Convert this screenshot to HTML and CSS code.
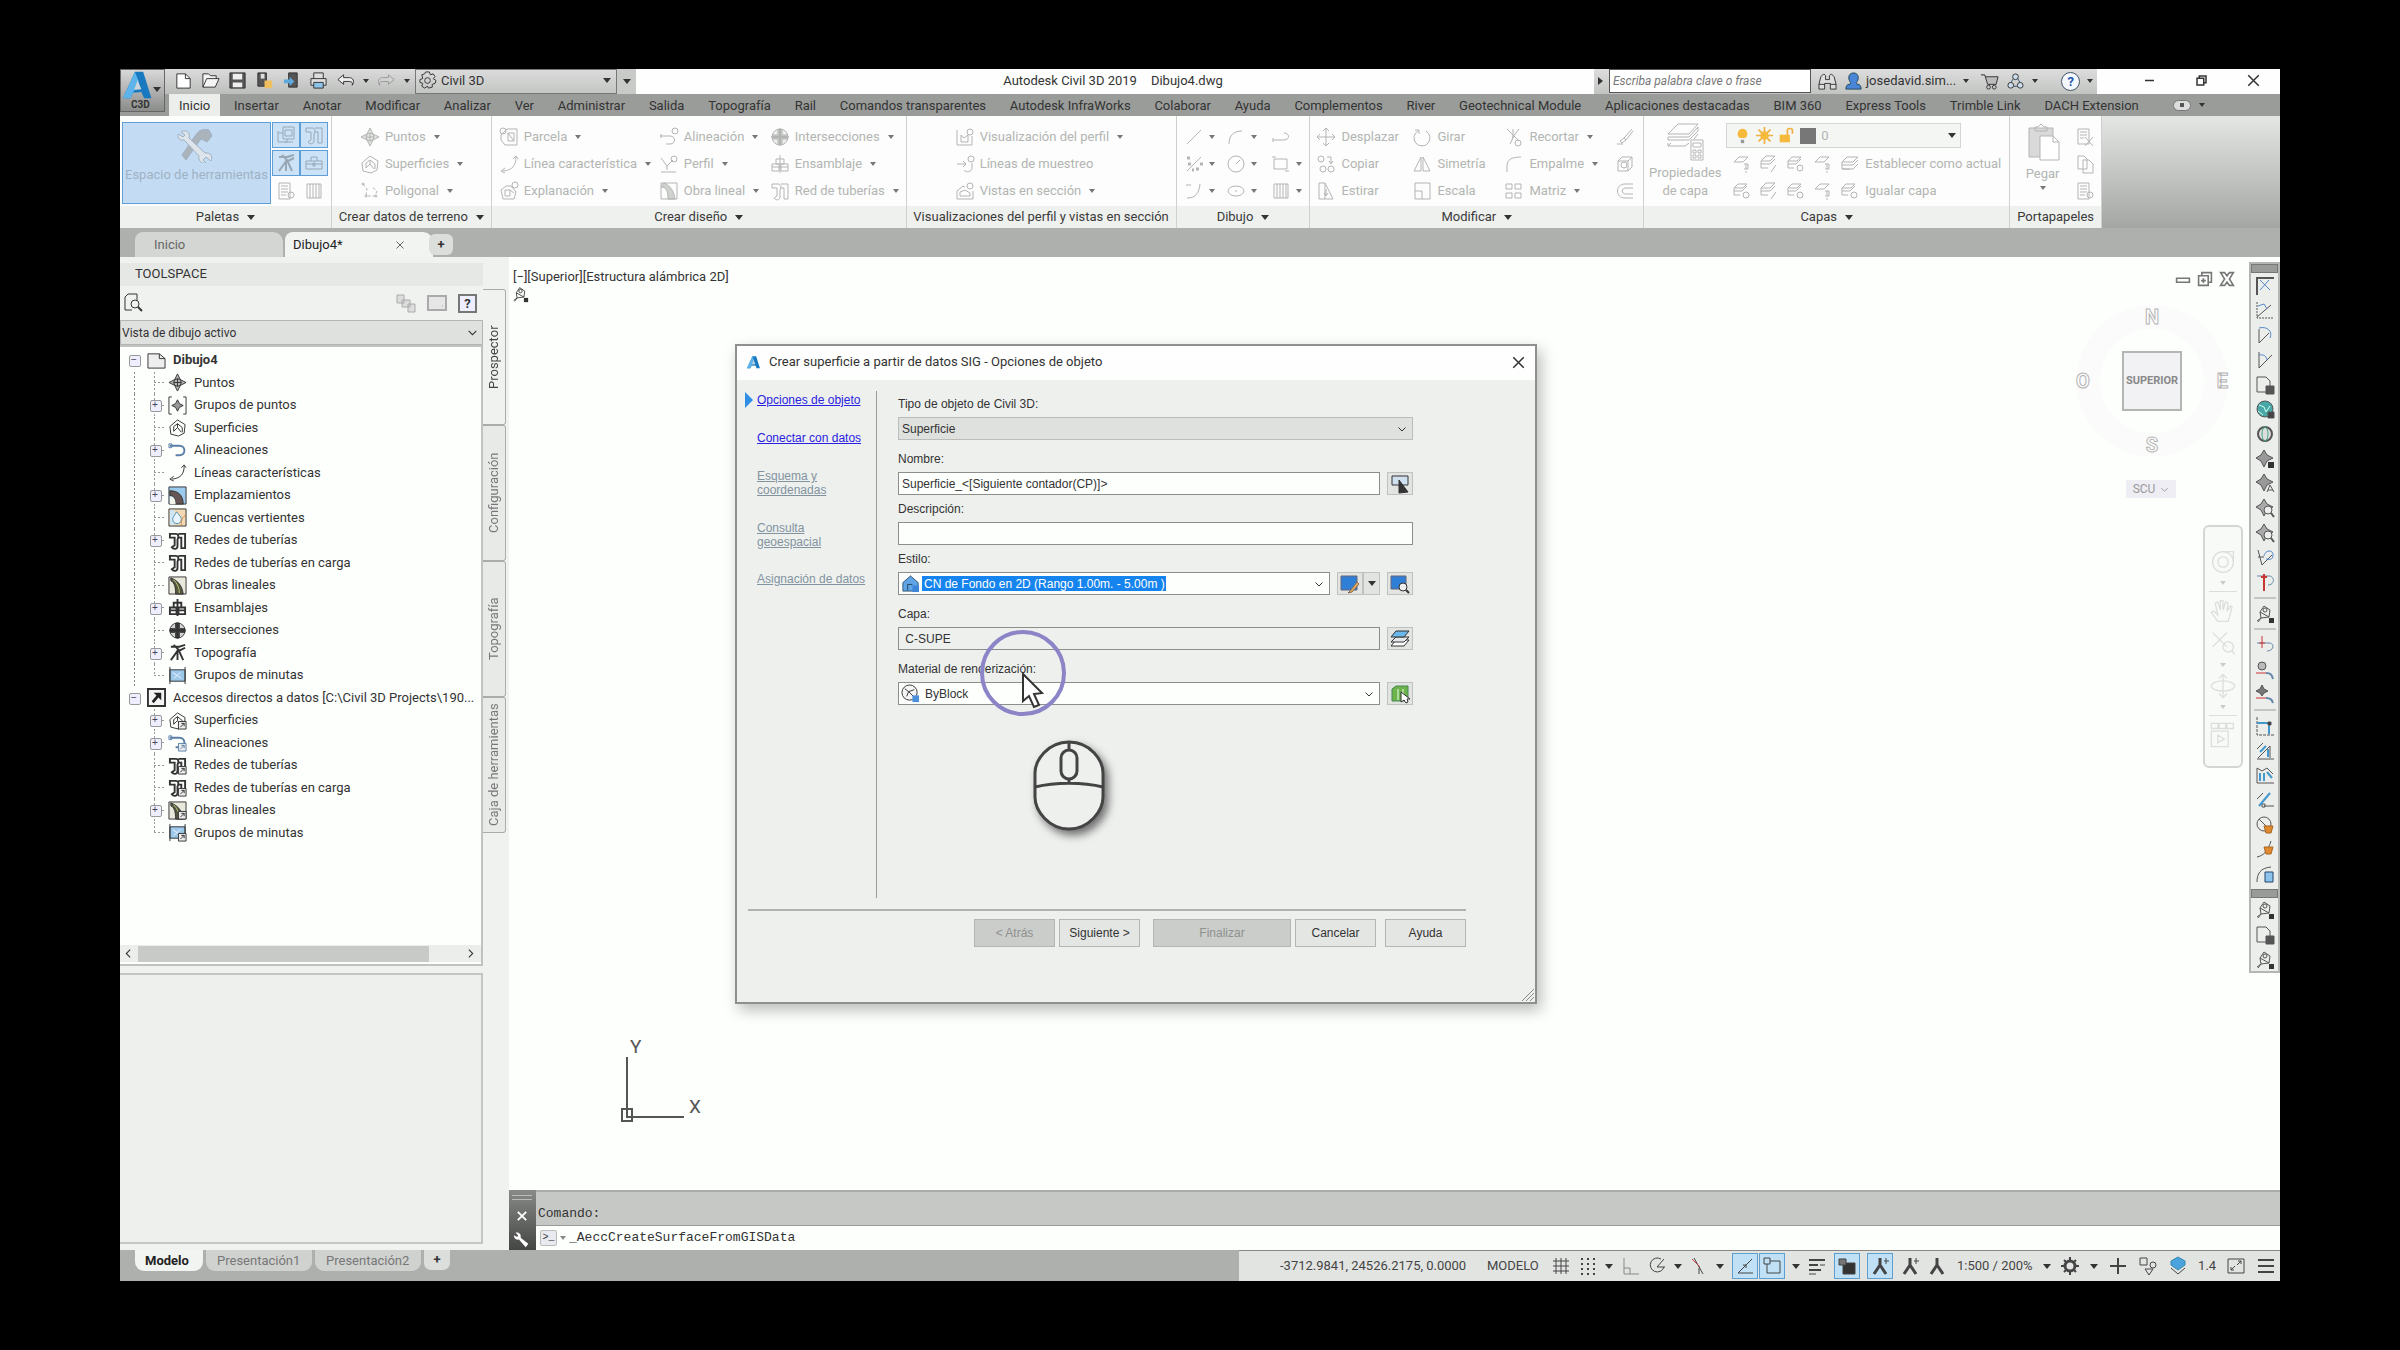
FILE: index.html
```html
<!DOCTYPE html>
<html lang="es">
<head>
<meta charset="utf-8">
<title>Autodesk Civil 3D 2019 - Dibujo4.dwg</title>
<link rel="stylesheet" href="styles.css">
</head>
<body>
<svg class="defs" aria-hidden="true">
<symbol id="new" viewBox="0 0 20 20"><path d="M3 3h9l5 5v10H3z" fill="#fff"/><path d="M12 3v5h5"/></symbol>
<symbol id="open" viewBox="0 0 20 20"><path d="M2 17V3h6l2 2h6v3M2 17l4-9h13l-4 9z" fill="#f4f4f4"/></symbol>
<symbol id="save" viewBox="0 0 20 20"><path d="M2 2h16v16H2z" fill="#555"/><path d="M5 3h10v6H5zM5 12h10v5H5z" fill="#eee" stroke="none"/></symbol>
<symbol id="saveas" viewBox="0 0 20 20"><path d="M3 2h9v14H3z" fill="#555"/><path d="M6 3h4v5H6z" fill="#ddd" stroke="none"/><path d="M10 10h8v8h-8z" fill="#f0c060" stroke="none"/></symbol>
<symbol id="cloud" viewBox="0 0 20 20"><path d="M7 2h9v15H7z" fill="#555"/><path d="M2 9h6V6l5 5-5 5v-3H2z" fill="#5fa8dc" stroke="none"/></symbol>
<symbol id="print" viewBox="0 0 20 20"><path d="M5 8V2h10v6M2 8h16v7H2z" fill="#ddd"/><path d="M5 12h10v6H5z" fill="#8cc4e8"/></symbol>
<symbol id="undo" viewBox="0 0 20 20"><path d="M8 4L2 9l6 5v-3h6c3 0 4 2 3 4 3-4 1-8-3-8H8z" fill="#eee"/></symbol>
<symbol id="redo" viewBox="0 0 20 20"><path d="M12 4l6 5-6 5v-3H6c-3 0-4 2-3 4-3-4-1-8 3-8h6z" fill="#ddd"/></symbol>
<symbol id="gear" viewBox="0 0 20 20"><path d="M8 1h4l1 3 3-1 2 3-2 2 3 2-1 3-3 1v3l-4 1-1-2-3 2-3-2 1-3-3-1V9l3-1-1-4 3-1z"/><circle cx="10" cy="10" r="3"/></symbol>
<symbol id="bino" viewBox="0 0 20 20"><path d="M3 5l3-3 2 2v4h4V4l2-2 3 3 2 8v5h-6v-6H7v6H1v-5z" fill="#ddd"/><path d="M1 13h6M13 13h6"/></symbol>
<symbol id="user" viewBox="0 0 20 20"><path d="M10 1c3 0 5 2 5 5 0 2-1 4-2 5l1 2c3 0 4 2 4 5H2c0-3 1-5 4-5l1-2C6 10 5 8 5 6c0-3 2-5 5-5z" fill="#4a86d8" stroke="#245"/></symbol>
<symbol id="cart" viewBox="0 0 20 20"><path d="M1 3h4l3 10h9l2-8H6" fill="#bbb"/><circle cx="9" cy="16" r="2"/><circle cx="15" cy="16" r="2"/></symbol>
<symbol id="a360" viewBox="0 0 20 20"><path d="M10 3l7 12H3z" stroke="#357"/><circle cx="10" cy="5" r="3" fill="#cde"/><circle cx="5" cy="14" r="3" fill="#cde"/><circle cx="15" cy="14" r="3" fill="#cde"/></symbol>
<symbol id="point" viewBox="0 0 20 20"><path d="M10 1l3 6 6 3-6 3-3 6-3-6-6-3 6-3z" fill="currentColor" fill-opacity=".35"/><circle cx="10" cy="10" r="4"/><path d="M10 6v8M6 10h8"/></symbol>
<symbol id="surf" viewBox="0 0 20 20"><path d="M10 2l8 5-1 9-6 3-8-2-1-8z"/><path d="M6 14V9l4-3 5 4v5M6 14l4-4 4 5M10 6v4"/></symbol>
<symbol id="poly" viewBox="0 0 20 20"><path d="M3 3l4 5-1 7h9l2-5-5-4" stroke-dasharray="3 2"/><circle cx="3" cy="3" r="1"/><circle cx="6" cy="15" r="1"/><circle cx="16" cy="15" r="1"/></symbol>
<symbol id="parcel" viewBox="0 0 20 20"><path d="M8 2h10v16H6l-4-5V8z"/><path d="M9 6h6v8H9zM9 6l6 8"/><circle cx="4" cy="4" r="3"/></symbol>
<symbol id="feat" viewBox="0 0 20 20"><path d="M17 3c0 8-3 13-13 14"/><path d="M14 5l3-3 2 3M6 14l-4 3 4 2"/></symbol>
<symbol id="grade" viewBox="0 0 20 20"><path d="M7 5h5l5 6-2 7H4L2 9z"/><path d="M6 9h5v6H6zM11 9l4 3"/><circle cx="16" cy="4" r="3"/></symbol>
<symbol id="align" viewBox="0 0 20 20"><path d="M2 5h10c7 0 7 10 0 10H8" stroke-width="2"/><path d="M1 3h3v4H1z"/></symbol>
<symbol id="alignc" viewBox="0 0 20 20"><path d="M1 9h10c6 0 6 8 0 8H7M2 7v4"/><circle cx="16" cy="4" r="3"/></symbol>
<symbol id="profile" viewBox="0 0 20 20"><path d="M2 4l6 8 6-6M2 18h15M8 12v4"/><circle cx="15" cy="5" r="3"/></symbol>
<symbol id="corr" viewBox="0 0 20 20"><path d="M2 2h16v16H2z"/><path d="M5 2c7 3 10 9 11 16H9C9 11 8 6 2 6z" fill="currentColor" fill-opacity=".6"/></symbol>
<symbol id="inter" viewBox="0 0 20 20"><circle cx="10" cy="10" r="8" fill="currentColor" fill-opacity=".2"/><path d="M8 2v6H2M12 2v6h6M8 18v-6H2M12 18v-6h6"/><path d="M9 2h2v16H9zM2 9h16v2H2z" fill="currentColor"/></symbol>
<symbol id="asm" viewBox="0 0 20 20"><path d="M10 1v18M6 5h8v5H6zM2 10h7v7H2zM11 10h7v7h-7zM2 13h16"/></symbol>
<symbol id="pipe" viewBox="0 0 20 20"><path d="M2 3h6c4 0 3 4 2 6v7c0 3-4 4-6 1l3-2V7H2zM11 3h7v15h-4V7h-3"/></symbol>
<symbol id="view" viewBox="0 0 20 20"><path d="M2 3v15h15V9M6 8v7h7V8l-4 3z"/><circle cx="15" cy="5" r="3"/></symbol>
<symbol id="sect" viewBox="0 0 20 20"><path d="M2 18v-8l6-5 2 1M2 18h16v-8M5 15v-4l5-2 5 3v3z"/><circle cx="15" cy="5" r="3"/></symbol>
<symbol id="sample" viewBox="0 0 20 20"><path d="M2 10h9M8 7l3 3-3 3M17 9v5c0 4-6 5-8 2"/><circle cx="16" cy="5" r="3"/></symbol>
<symbol id="line" viewBox="0 0 20 20"><path d="M3 17L17 3"/></symbol>
<symbol id="arc" viewBox="0 0 20 20"><path d="M3 17C3 8 8 4 16 4"/></symbol>
<symbol id="pline" viewBox="0 0 20 20"><path d="M2 13h11c6 0 6-7 0-7M2 11v4"/></symbol>
<symbol id="dots" viewBox="0 0 20 20"><path d="M3 17L17 3"/><path d="M3 4h3M4 10h3M12 15h3M16 10h3M8 16h2" stroke-width="3"/></symbol>
<symbol id="circ" viewBox="0 0 20 20"><circle cx="10" cy="10" r="8"/><path d="M10 10l4-4"/></symbol>
<symbol id="rect" viewBox="0 0 20 20"><path d="M3 5h13v10H3z"/><path d="M1 3h4M14 17h4"/></symbol>
<symbol id="curve" viewBox="0 0 20 20"><path d="M2 4h5M3 17C12 17 15 12 16 3"/></symbol>
<symbol id="ell" viewBox="0 0 20 20"><ellipse cx="10" cy="10" rx="8" ry="5"/><path d="M9 10h2"/></symbol>
<symbol id="hatch" viewBox="0 0 20 20"><path d="M3 3h14v14H3z"/><path d="M6 3v14M9 3v14M12 3v14M15 3v14"/></symbol>
<symbol id="move" viewBox="0 0 20 20"><path d="M10 1v18M1 10h18M7 4l3-3 3 3M7 16l3 3 3-3M4 7l-3 3 3 3M16 7l3 3-3 3"/></symbol>
<symbol id="copy" viewBox="0 0 20 20"><circle cx="5" cy="5" r="3"/><circle cx="7" cy="15" r="3"/><circle cx="15" cy="15" r="3"/><path d="M11 3h4v6M13 7l2 3 2-3"/></symbol>
<symbol id="stretch" viewBox="0 0 20 20"><path d="M3 2h6v16H3zM9 2l8 16H9M10 8v6M8 12l2 3 2-3"/></symbol>
<symbol id="rotate" viewBox="0 0 20 20"><path d="M6 4a8 8 0 1 0 8 0M3 3l4 0v4"/></symbol>
<symbol id="mirror" viewBox="0 0 20 20"><path d="M9 3v14H2zM11 3v14h7z"/></symbol>
<symbol id="scale" viewBox="0 0 20 20"><path d="M3 2h15v16H3zM3 10h7v8"/></symbol>
<symbol id="trim" viewBox="0 0 20 20"><path d="M3 2l12 12M9 2v9L6 17M15 2L8 11"/><circle cx="14" cy="16" r="3"/></symbol>
<symbol id="fillet" viewBox="0 0 20 20"><path d="M3 18v-6C3 6 7 3 17 3"/></symbol>
<symbol id="array" viewBox="0 0 20 20"><path d="M2 3h6v5H2zM11 3h6v5h-6zM2 12h6v5H2zM11 12h6v5h-6z"/></symbol>
<symbol id="brush" viewBox="0 0 20 20"><path d="M17 2l-8 9 2 2 7-9M9 11l-4 3 2 2 4-3M2 17h6"/></symbol>
<symbol id="box" viewBox="0 0 20 20"><path d="M3 7h10v10H3zM7 3h10v10l-4 4M3 7l4-4M13 7l4-4"/><circle cx="9" cy="11" r="3"/></symbol>
<symbol id="offset" viewBox="0 0 20 20"><path d="M18 3h-8c-10 0-10 14 0 14h8M18 7h-7c-5 0-5 6 0 6h7"/></symbol>
<symbol id="layer" viewBox="0 0 20 20"><path d="M7 3h11l-5 5H2zM2 8v3h11l5-5M2 11v4h11l5-5M2 15h8"/></symbol>
<symbol id="layprop" viewBox="0 0 40 38"><path d="M13 1h20l-9 10H3zM3 14h21l9-10v4l-9 9H3zM3 20v3h17l4-3M33 11l-4 5M3 23l3-3"/><path d="M26 17h12v20H26z" fill="#fff"/><path d="M28 20h8v4h-8zM28 27h3v3h-3zM33 27h3v3h-3zM28 32h3v3h-3zM33 32h3v3h-3z"/></symbol>
<symbol id="lay1" viewBox="0 0 20 20"><path d="M7 3h9l-5 5H2z"/><path d="M14 10v5M14 17v2M12 10h4v5h-4"/></symbol>
<symbol id="lay2" viewBox="0 0 20 20"><path d="M7 2h9l-5 5H2zM2 7v3h9l5-5M2 10v4h7M17 11l-5 7"/></symbol>
<symbol id="lay3" viewBox="0 0 20 20"><path d="M6 3h9l-4 4H2zM2 7v3h8l5-5M2 10v4h6"/><circle cx="14" cy="14" r="3"/></symbol>
<symbol id="clip" viewBox="0 0 34 38"><path d="M3 4h24v29H3z" fill="currentColor" fill-opacity=".5"/><path d="M9 7V3h3l3-3 3 3h3v4z"/><path d="M14 12h13l6 6v18H14z" fill="#fff"/><path d="M27 12v6h6"/></symbol>
<symbol id="cut" viewBox="0 0 20 20"><path d="M3 2h11v15H3zM5 5h7M5 8h7M5 11h4M10 10l8 9M18 10l-8 9"/></symbol>
<symbol id="pages" viewBox="0 0 20 20"><path d="M3 2h6l3 3v10H3zM8 6h6l4 4v9H8z"/></symbol>
<symbol id="sheet" viewBox="0 0 20 20"><path d="M3 2h11v16H3zM5 5h7M5 8h7M5 11h7M5 14h5"/><circle cx="15" cy="14" r="3"/></symbol>
<symbol id="tools" viewBox="0 0 38 34"><path d="M32 1c-6-2-11 1-14 6L5 26l4 5 15-21 6 3 5-6z" fill="#aab3ba"/><path d="M4 3c4-3 10 0 8 6l16 15c6-1 8 4 6 8l-5-4-3 3 3 3c-5 1-8-3-7-7L7 11C3 12 0 9 1 5l5 3 2-2z" fill="#dde4ea"/></symbol>
<symbol id="survey" viewBox="0 0 20 20"><path d="M3 4h10M6 2l5 5-8 11M11 7l5 11M10 7v11M11 4l7-2M12 8l6-3" stroke-width="2"/></symbol>
<symbol id="case" viewBox="0 0 20 20"><path d="M2 8h16v8H2zM7 8V4h6v4M2 11h16M9 10h2v3H9z"/></symbol>
<symbol id="dwg" viewBox="0 0 20 20"><path d="M1 3h12l6 5v10H1z" fill="#eee"/><path d="M13 3v5h6"/></symbol>
<symbol id="group" viewBox="0 0 20 20"><path d="M4 1H1v18h3M16 1h3v18h-3"/><path d="M10 4l2 4 4 2-4 2-2 4-2-4-4-2 4-2z" fill="#999"/></symbol>
<symbol id="site" viewBox="0 0 20 20"><path d="M1 1h18v18H1z" fill="#9ccbee"/><path d="M2 5c9 0 14 5 14 14H8c0-6-2-9-6-9z" fill="#655"/><path d="M2 11c4 0 6 3 6 8H2z" fill="#f4f4ec" stroke="none"/></symbol>
<symbol id="basin" viewBox="0 0 20 20"><path d="M1 1h18v18H1z" fill="#f2d9b4"/><path d="M2 2h5v16H2z" fill="#cfe6f5" stroke="none"/><path d="M9 4c4 5 5 6 5 8 0 6-9 6-9 0 0-2 1-3 4-8z" fill="#eaf6ff" stroke="#48a"/><path d="M14 18c0-6 1-9 5-10" stroke="#c84"/></symbol>
<symbol id="corrc" viewBox="0 0 20 20"><path d="M1 1h18v18H1z" fill="#e8e8dc"/><path d="M3 2c8 3 12 9 13 17H8c0-7-1-12-5-14z" fill="#554"/><path d="M6 4c4 4 6 9 6 14" stroke="#bc6"/></symbol>
<symbol id="minute" viewBox="0 0 20 20"><path d="M2 1v18M18 1v18M2 4h16v12H2z" fill="#9cc8ea"/><path d="M5 7l9 6M6 13l7-6" stroke="#eef"/></symbol>
<symbol id="short" viewBox="0 0 20 20"><path d="M1 1h18v18H1z" fill="#f4f4f4" stroke-width="2"/><path d="M7 5h8v8l-3-3-5 6-2-2 5-6z" fill="#222" stroke="none"/></symbol>
<symbol id="badge" viewBox="0 0 20 20"><path d="M11 11h8v8h-8z" fill="#eee" stroke-width="1"/><path d="M13 17l4-4M14 13h3v3" stroke-width="1"/></symbol>
<symbol id="find" viewBox="0 0 20 20"><path d="M9 17H2V4l3-3h9v6"/><circle cx="12" cy="11" r="4"/><path d="M15 14l4 4" stroke-width="2"/></symbol>
<symbol id="boxes" viewBox="0 0 20 20"><path d="M1 2h7v8H1zM6 7h8v7H6zM12 11h7v8h-7z" fill="#ddd"/></symbol>
<symbol id="screens" viewBox="0 0 20 20"><path d="M7 2h11v12H7zM2 8h5M2 6v11h9v-3M9 17h8M9 5h7v6H9z"/></symbol>
<symbol id="panel" viewBox="0 0 20 20"><path d="M1 3h18v14H1z" fill="#e6e6e6" stroke-width="2"/><path d="M15 13h1"/></symbol>
<symbol id="pick" viewBox="0 0 20 20"><path d="M2 2h16v9H2z" fill="#cfe0f0"/><path d="M9 6v13l9-1z" fill="#333"/></symbol>
<symbol id="edit" viewBox="0 0 20 20"><path d="M1 2h16v14H1z" fill="#2f7fd6" stroke="#667"/><path d="M17 8l-7 9-2 2 4-1 7-8z" fill="#e0b060" stroke="#865"/></symbol>
<symbol id="look" viewBox="0 0 20 20"><path d="M1 2h15v13H1z" fill="#2f7fd6" stroke="#667"/><circle cx="13" cy="13" r="4" fill="#eee"/><path d="M16 16l3 3" stroke-width="2"/></symbol>
<symbol id="layc" viewBox="0 0 20 20"><path d="M6 11h13l-5 6H1z" fill="#fff"/><path d="M6 8h13l-5 5H1z" fill="#e4e8ea"/><path d="M6 2h13l-5 6H1z" fill="#6ab8ec"/></symbol>
<symbol id="mat" viewBox="0 0 20 20"><path d="M2 5l4-3h12v12l-3 3H2z" fill="#6db34c" stroke="#485"/><path d="M8 5v11M13 5v11" stroke="#efe"/><path d="M11 8v10l3-2 2 3 2-1-1-3h3z" fill="#fff"/></symbol>
<symbol id="house" viewBox="0 0 20 20"><path d="M10 2l8 7v9H2V9z" fill="#5fa4e6" stroke="#357"/><path d="M7 17v-6h5" stroke="#245"/><path d="M12 12h7v7h-7z" fill="#3f86d8" stroke="none"/></symbol>
<symbol id="ball" viewBox="0 0 20 20"><circle cx="9" cy="9" r="8" fill="#f6f6f6"/><path d="M4 5l4 3-2 5M8 8l6-2M8 8l5 5"/><path d="M12 12h7v7h-7z" fill="#4a8fdc" stroke="none"/></symbol>
<symbol id="s1" viewBox="0 0 20 20"><path d="M2 19V2h17M2 19V2" stroke-width="2"/><path d="M5 4l10 10M5 14L14 4" stroke="#58c"/></symbol>
<symbol id="s2" viewBox="0 0 20 20"><path d="M2 2v16h16" stroke-dasharray="2 1"/><path d="M2 17L16 5"/><path d="M3 6l6-2 3 5" stroke="#58c"/></symbol>
<symbol id="s3" viewBox="0 0 20 20"><path d="M4 4v14L14 8"/><path d="M4 3c8-2 14 3 11 10" stroke="#58c"/></symbol>
<symbol id="s4" viewBox="0 0 20 20"><path d="M4 2v16L17 5"/><path d="M4 5c5-1 8 2 8 5" stroke="#58c"/></symbol>
<symbol id="s5" viewBox="0 0 20 20"><path d="M2 2h9l4 4v11H2z"/><path d="M11 11h8v8h-8z" fill="#555"/></symbol>
<symbol id="globe" viewBox="0 0 20 20"><circle cx="10" cy="10" r="8" fill="#4aa7a8"/><path d="M4 6l5 2 2 5 4-6M3 12l5 4" stroke="#cfe"/><path d="M13 13h6v6h-6z" fill="#444"/></symbol>
<symbol id="globe2" viewBox="0 0 20 20"><circle cx="10" cy="10" r="7" fill="#ddd" stroke-width="2"/><ellipse cx="10" cy="10" rx="3" ry="7" stroke="#4a8"/></symbol>
<symbol id="pt1" viewBox="0 0 20 20"><path d="M9 1l3 5 6 3-6 3-3 6-3-6-5-3 5-3z" fill="#999"/><path d="M13 13h6v6h-6z" fill="#333" stroke="none"/></symbol>
<symbol id="pt2" viewBox="0 0 20 20"><path d="M9 1l3 5 6 3-6 3-3 6-3-6-5-3 5-3z" fill="#999"/><path d="M12 19l3-7 4 7M13 17h5"/></symbol>
<symbol id="pt3" viewBox="0 0 20 20"><path d="M9 1l3 5 6 3-6 3-3 6-3-6-5-3 5-3z" fill="#aaa"/><circle cx="13" cy="12" r="4" fill="#eee"/><path d="M16 15l3 4" stroke-width="2"/></symbol>
<symbol id="s6" viewBox="0 0 20 20"><path d="M3 3l4 15L17 8M3 10h6"/><path d="M9 9c1-6 9-7 9-1s-5 4-7 4" stroke="#58c"/></symbol>
<symbol id="s7" viewBox="0 0 20 20"><path d="M2 4h12c6 0 6 9-1 9" stroke="#68a"/><path d="M9 2v17M6 5h6" stroke="#c33" stroke-width="2"/></symbol>
<symbol id="net" viewBox="0 0 20 20"><path d="M9 2l6 4-1 7-8 1-3 4M9 2L5 8l1 6M5 8l9 5M2 17l4-3"/><circle cx="10" cy="6" r="2"/><path d="M14 14h5v5h-5z" fill="#333" stroke="none"/></symbol>
<symbol id="s8" viewBox="0 0 20 20"><path d="M2 8h12c6 0 5 8-2 8" stroke="#68a"/><path d="M7 1v12M4 8h6" stroke="#c33"/></symbol>
<symbol id="s9" viewBox="0 0 20 20"><circle cx="7" cy="6" r="4" fill="#bbb"/><path d="M1 13h10" stroke="#c33"/><path d="M11 13c5 0 6 2 7 6" stroke="#68a" stroke-width="2"/></symbol>
<symbol id="s10" viewBox="0 0 20 20"><path d="M7 1l2 4 4 2-4 2-2 3-2-3-4-2 4-2z" fill="#777"/><path d="M1 14h10" stroke="#c33"/><path d="M11 14c5 0 6 2 7 5" stroke="#68a" stroke-width="2"/></symbol>
<symbol id="r1" viewBox="0 0 20 20"><path d="M2 1v18h17" stroke-dasharray="3 1"/><path d="M2 7h12v11" stroke="#49c" stroke-width="2"/><path d="M13 6h3v3h-3z" fill="#333"/></symbol>
<symbol id="r2" viewBox="0 0 20 20"><path d="M2 9l6-6M2 19h17M3 18l12-12v12"/><path d="M5 12l6-6M13 9v8" stroke="#49c" stroke-width="2"/></symbol>
<symbol id="r3" viewBox="0 0 20 20"><path d="M2 3v15h17M2 3l5 3 5-3 6 6"/><path d="M5 8v8M9 8v8M12 7l5 6" stroke="#49c" stroke-width="2"/></symbol>
<symbol id="r4" viewBox="0 0 20 20"><path d="M2 9l6-6M9 16h10M7 14h3v3H7z"/><path d="M4 16L15 3" stroke="#49c" stroke-width="2"/></symbol>
<symbol id="r5" viewBox="0 0 20 20"><circle cx="9" cy="9" r="7"/><path d="M4 4l8 8"/><path d="M9 11h9l-2 7h-5z" fill="#e08a30" stroke="#a62"/></symbol>
<symbol id="r6" viewBox="0 0 20 20"><path d="M2 18c6-1 11-6 14-16"/><path d="M9 8h9l-2 7h-5z" fill="#e08a30" stroke="#a62"/></symbol>
<symbol id="r7" viewBox="0 0 20 20"><path d="M2 18c0-8 3-14 14-15"/><path d="M10 8h8v10h-8z" fill="#8cc4ee" stroke="#246"/></symbol>
<symbol id="wheel" viewBox="0 0 20 20"><circle cx="10" cy="10" r="8"/><circle cx="10" cy="10" r="4"/><path d="M10 2h8v8"/></symbol>
<symbol id="hand" viewBox="0 0 20 20"><path d="M6 18l-5-7 2-1 3 3L4 4l2-1 2 6V2h2v7l2-6 2 1-1 6 3-4 1 1-3 11z"/></symbol>
<symbol id="zoomx" viewBox="0 0 20 20"><path d="M2 2l11 11M13 2L2 13"/><circle cx="14" cy="13" r="4"/><path d="M17 16l2 3"/></symbol>
<symbol id="orbit" viewBox="0 0 20 20"><ellipse cx="10" cy="10" rx="9" ry="4"/><path d="M10 1v18M7 4l3-3 3 3M7 16l3 3 3-3"/></symbol>
<symbol id="film" viewBox="0 0 20 20"><path d="M1 1h5v4H1zM7 1h5v4H7zM13 1h5v4h-5zM1 7h13v12H1zM6 10l5 3-5 3z"/></symbol>
<symbol id="grid" viewBox="0 0 20 20"><path d="M5 2v16M10 2v16M15 2v16M2 5h16M2 10h16M2 15h16"/></symbol>
<symbol id="snap" viewBox="0 0 20 20"><path d="M3 3h2M9 3h2M15 3h2M3 8h2M9 8h2M15 8h2M3 13h2M9 13h2M15 13h2M3 18h2M9 18h2M15 18h2" stroke-width="2"/></symbol>
<symbol id="ortho" viewBox="0 0 20 20"><path d="M4 2v16h15M4 12h6v6" stroke="#888"/></symbol>
<symbol id="polar" viewBox="0 0 20 20"><path d="M14 3a7 7 0 1 0 3 8M10 11l7-8M10 11h8"/></symbol>
<symbol id="iso" viewBox="0 0 20 20"><path d="M5 2l9 16"/><path d="M3 3l8 8" stroke="#c44"/><path d="M10 12v6"/></symbol>
<symbol id="track" viewBox="0 0 20 20"><path d="M17 3L3 17h15"/><path d="M8 9h3v3" /></symbol>
<symbol id="osnap" viewBox="0 0 20 20"><path d="M5 5h13v12H5z"/><path d="M2 2h6v6H2z" fill="#bfe0f4"/></symbol>
<symbol id="lwt" viewBox="0 0 20 20"><path d="M2 4h16M2 9h9M2 14h12" stroke-width="2"/><path d="M2 18h7M13 9h5"/></symbol>
<symbol id="transp" viewBox="0 0 20 20"><path d="M6 7h12v11H6z" fill="#333"/><path d="M2 3h7v6H2z" fill="#777"/></symbol>
<symbol id="anno" viewBox="0 0 20 20"><path d="M10 2v8M10 9l-6 9M10 9l6 9" stroke-width="3"/></symbol>
<symbol id="star" viewBox="0 0 20 20"><path d="M14 5h5M16 2v6"/></symbol>
<symbol id="cog" viewBox="0 0 20 20"><circle cx="10" cy="10" r="5" stroke-width="3"/><path d="M10 1v4M10 15v4M1 10h4M15 10h4M4 4l3 3M13 13l3 3M16 4l-3 3M7 13l-3 3" stroke-width="2"/></symbol>
<symbol id="plus" viewBox="0 0 20 20"><path d="M10 2v16M2 10h16" stroke-width="2"/></symbol>
<symbol id="iso2" viewBox="0 0 20 20"><path d="M2 2h7v7H2zM11 19l-4-6h8z"/><circle cx="15" cy="9" r="3"/></symbol>
<symbol id="perf" viewBox="0 0 20 20"><path d="M10 1l7 4v4l-7 5-7-5V5z" fill="#4aa3dc" stroke="#38a"/><path d="M3 12l7 6 7-6"/></symbol>
<symbol id="clean" viewBox="0 0 20 20"><path d="M2 3h16v14H2zM5 14l4-4M11 9l4-4M15 8V5h-3M5 11v3h3"/></symbol>
<symbol id="menu" viewBox="0 0 20 20"><path d="M2 4h16M2 10h16M2 16h16" stroke-width="2"/></symbol>
<symbol id="wrench" viewBox="0 0 20 20"><path d="M3 2c4-1 7 2 6 6l9 7-3 4-8-9c-4 1-6-2-6-5l4 2 1-2z" fill="#fff" stroke="none"/></symbol>
<symbol id="x" viewBox="0 0 20 20"><path d="M3 3l14 14M17 3L3 17"/></symbol>
<symbol id="chev" viewBox="0 0 20 20"><path d="M3 7l7 7 7-7" stroke-width="2"/></symbol>
<symbol id="logo" viewBox="0 0 36 30"><path d="M13 0h9l9 29h-8l-3-7-9 1-3 6H0z" fill="#1878c0" stroke="none"/><path d="M13 0L0 29l8 0 3-6 6-13z" fill="#5cb4ea" stroke="none"/><path d="M16 9l4 10-8 1z" fill="#c9d4dc" stroke="none"/></symbol>
</svg>

<div class="app">
  <header class="top">
    <button class="appbtn" aria-label="Menú de la aplicación"><svg class="logo"><use href="#logo"/></svg><i class="caret"></i><b>C3D</b></button>
    <div class="topmain">
      <div class="titlebar">
        <div class="quick">
          <svg><use href="#new"/></svg><svg><use href="#open"/></svg><svg><use href="#save"/></svg><svg><use href="#saveas"/></svg><svg><use href="#cloud"/></svg><svg><use href="#print"/></svg><svg><use href="#undo"/></svg><i class="caret"></i><svg class="off"><use href="#redo"/></svg><i class="caret"></i>
        </div>
        <div class="workspace"><svg><use href="#gear"/></svg><select aria-label="Espacio de trabajo"><option>Civil 3D</option></select><i class="caret"></i></div>
        <button class="quickmore" aria-label="Personalizar"><i class="caret"></i></button>
        <div class="title"><span>Autodesk Civil 3D 2019</span><span>Dibujo4.dwg</span></div>
        <div class="info">
          <i class="caret side"></i>
          <input type="text" placeholder="Escriba palabra clave o frase" aria-label="Buscar">
          <svg><use href="#bino"/></svg><svg><use href="#user"/></svg><span class="uname">josedavid.sim...</span><i class="caret"></i><svg class="cart"><use href="#cart"/></svg><svg><use href="#a360"/></svg><i class="caret"></i><button class="help" aria-label="Ayuda">?</button><i class="caret"></i>
        </div>
        <div class="winbtns">
          <button aria-label="Minimizar"><svg viewBox="0 0 20 20"><path d="M4 10h12" stroke-width="2"/></svg></button>
          <button aria-label="Restaurar"><svg viewBox="0 0 20 20"><path d="M4 7h9v9H4zM7 7V4h9v9h-3" stroke-width="2"/></svg></button>
          <button aria-label="Cerrar"><svg class="heavy"><use href="#x"/></svg></button>
        </div>
      </div>
      <nav class="tabs">
        <div class="tablist"><a class="on" href="#">Inicio</a><a href="#">Insertar</a><a href="#">Anotar</a><a href="#">Modificar</a><a href="#">Analizar</a><a href="#">Ver</a><a href="#">Administrar</a><a href="#">Salida</a><a href="#">Topografía</a><a href="#">Rail</a><a href="#">Comandos transparentes</a><a href="#">Autodesk InfraWorks</a><a href="#">Colaborar</a><a href="#">Ayuda</a><a href="#">Complementos</a><a href="#">River</a><a href="#">Geotechnical Module</a><a href="#">Aplicaciones destacadas</a><a href="#">BIM 360</a><a href="#">Express Tools</a><a href="#">Trimble Link</a><a href="#">DACH Extension</a></div>
        <span class="pill"><i></i></span><i class="caret"></i>
      </nav>
    </div>
  </header>

  <section class="ribbon">
    <div class="panel">
      <div class="pbody pal">
        <button class="big"><svg><use href="#tools"/></svg>Espacio de herramientas</button>
        <div class="palgrid"><span class="lit"><svg><use href="#screens"/></svg></span><span class="lit"><svg><use href="#pipe"/></svg></span><span class="lit"><svg><use href="#survey"/></svg></span><span class="lit"><svg><use href="#case"/></svg></span><span><svg><use href="#sheet"/></svg></span><span><svg><use href="#hatch"/></svg></span></div>
      </div>
      <div class="plabel">Paletas <i class="caret"></i></div>
    </div>
    <div class="panel">
      <div class="pbody rows terr">
        <button><svg><use href="#point"/></svg>Puntos<i class="caret"></i></button>
        <button><svg><use href="#surf"/></svg>Superficies<i class="caret"></i></button>
        <button><svg><use href="#poly"/></svg>Poligonal<i class="caret"></i></button>
      </div>
      <div class="plabel">Crear datos de terreno <i class="caret"></i></div>
    </div>
    <div class="panel">
      <div class="pbody rows dis">
        <button><svg><use href="#parcel"/></svg>Parcela<i class="caret"></i></button><button><svg><use href="#alignc"/></svg>Alineación<i class="caret"></i></button><button><svg><use href="#inter"/></svg>Intersecciones<i class="caret"></i></button>
        <button><svg><use href="#feat"/></svg>Línea característica<i class="caret"></i></button><button><svg><use href="#profile"/></svg>Perfil<i class="caret"></i></button><button><svg><use href="#asm"/></svg>Ensamblaje<i class="caret"></i></button>
        <button><svg><use href="#grade"/></svg>Explanación<i class="caret"></i></button><button><svg><use href="#corr"/></svg>Obra lineal<i class="caret"></i></button><button><svg><use href="#pipe"/></svg>Red de tuberías<i class="caret"></i></button>
      </div>
      <div class="plabel">Crear diseño <i class="caret"></i></div>
    </div>
    <div class="panel">
      <div class="pbody rows vis">
        <button><svg><use href="#view"/></svg>Visualización del perfil<i class="caret"></i></button>
        <button><svg><use href="#sample"/></svg>Líneas de muestreo</button>
        <button><svg><use href="#sect"/></svg>Vistas en sección<i class="caret"></i></button>
      </div>
      <div class="plabel">Visualizaciones del perfil y vistas en sección</div>
    </div>
    <div class="panel">
      <div class="pbody rows dib">
        <button aria-label="Línea"><svg><use href="#line"/></svg><i class="caret"></i></button><button aria-label="Arco"><svg><use href="#arc"/></svg><i class="caret"></i></button><button aria-label="Polilínea"><svg><use href="#pline"/></svg></button>
        <button aria-label="Puntos"><svg><use href="#dots"/></svg><i class="caret"></i></button><button aria-label="Círculo"><svg><use href="#circ"/></svg><i class="caret"></i></button><button aria-label="Rectángulo"><svg><use href="#rect"/></svg><i class="caret"></i></button>
        <button aria-label="Curva"><svg><use href="#curve"/></svg><i class="caret"></i></button><button aria-label="Elipse"><svg><use href="#ell"/></svg><i class="caret"></i></button><button aria-label="Sombreado"><svg><use href="#hatch"/></svg><i class="caret"></i></button>
      </div>
      <div class="plabel">Dibujo <i class="caret"></i></div>
    </div>
    <div class="panel">
      <div class="pbody rows mod">
        <button><svg><use href="#move"/></svg>Desplazar</button><button><svg><use href="#rotate"/></svg>Girar</button><button><svg><use href="#trim"/></svg>Recortar<i class="caret"></i></button><button aria-label="Borrar"><svg><use href="#brush"/></svg></button>
        <button><svg><use href="#copy"/></svg>Copiar</button><button><svg><use href="#mirror"/></svg>Simetría</button><button><svg><use href="#fillet"/></svg>Empalme<i class="caret"></i></button><button aria-label="Descomponer"><svg><use href="#box"/></svg></button>
        <button><svg><use href="#stretch"/></svg>Estirar</button><button><svg><use href="#scale"/></svg>Escala</button><button><svg><use href="#array"/></svg>Matriz<i class="caret"></i></button><button aria-label="Desfase"><svg><use href="#offset"/></svg></button>
      </div>
      <div class="plabel">Modificar <i class="caret"></i></div>
    </div>
    <div class="panel">
      <div class="pbody capas">
        <button class="tall"><svg><use href="#layprop"/></svg><span>Propiedades<br>de capa</span></button>
        <div class="laygrid">
          <div class="layersel">
            <svg viewBox="0 0 20 20"><path d="M10 2a6 6 0 0 1 3 11H7a6 6 0 0 1 3-11z" fill="#f5b93c" stroke="none"/><path d="M8 15h4v4H8z" fill="#999" stroke="none"/></svg>
            <svg viewBox="0 0 20 20"><path d="M10 0v20M0 10h20M3 3l14 14M17 3L3 17" stroke="#f0b040" stroke-width="2"/><circle cx="10" cy="10" r="5" fill="#f5b93c" stroke="none"/></svg>
            <svg viewBox="0 0 20 20"><path d="M2 9h12v9H2z" fill="#f5b93c" stroke="none"/><path d="M11 9V4c0-3 6-3 6 0v4" stroke="#f0b040" stroke-width="2"/></svg>
            <i class="swatch"></i><select aria-label="Capa actual"><option>0</option></select><i class="caret"></i>
          </div>
          <div class="lrow"><svg><use href="#lay1"/></svg><svg><use href="#lay2"/></svg><svg><use href="#lay3"/></svg><svg><use href="#lay1"/></svg><button><svg><use href="#layer"/></svg>Establecer como actual</button></div>
          <div class="lrow"><svg><use href="#lay3"/></svg><svg><use href="#lay2"/></svg><svg><use href="#lay3"/></svg><svg><use href="#lay1"/></svg><button><svg><use href="#lay3"/></svg>Igualar capa</button></div>
        </div>
      </div>
      <div class="plabel">Capas <i class="caret"></i></div>
    </div>
    <div class="panel">
      <div class="pbody port">
        <button class="tall"><svg><use href="#clip"/></svg><span>Pegar</span><i class="caret"></i></button>
        <div class="rows"><svg><use href="#cut"/></svg><svg><use href="#pages"/></svg><svg><use href="#sheet"/></svg></div>
      </div>
      <div class="plabel">Portapapeles</div>
    </div>
    <div class="rest"></div>
  </section>

  <nav class="docs">
    <a class="doc" href="#">Inicio</a><a class="doc on" href="#">Dibujo4*<svg class="heavy"><use href="#x"/></svg></a><button class="add" aria-label="Nuevo dibujo">+</button>
  </nav>

  <main class="work">
    <aside class="toolspace">
      <div class="tsmain">
        <h2>TOOLSPACE</h2>
        <div class="tsbar"><svg><use href="#find"/></svg><span></span><svg class="off"><use href="#boxes"/></svg><svg class="off"><use href="#panel"/></svg><button aria-label="Ayuda">?</button></div>
        <div class="tsview"><select aria-label="Vista"><option>Vista de dibujo activo</option></select><svg><use href="#chev"/></svg></div>
        <div class="tree">
          <ul>
            <li class="root first"><i class="tg">−</i><svg><use href="#dwg"/></svg><b>Dibujo4</b></li>
            <li><i></i><svg><use href="#point"/></svg>Puntos</li>
            <li><i class="tg">+</i><svg><use href="#group"/></svg>Grupos de puntos</li>
            <li><i></i><svg><use href="#surf"/></svg>Superficies</li>
            <li><i class="tg">+</i><svg class="blue"><use href="#align"/></svg>Alineaciones</li>
            <li><i></i><svg><use href="#feat"/></svg>Líneas características</li>
            <li><i class="tg">+</i><svg><use href="#site"/></svg>Emplazamientos</li>
            <li><i></i><svg><use href="#basin"/></svg>Cuencas vertientes</li>
            <li><i class="tg">+</i><svg class="heavy"><use href="#pipe"/></svg>Redes de tuberías</li>
            <li><i></i><svg class="heavy"><use href="#pipe"/></svg>Redes de tuberías en carga</li>
            <li><i></i><svg><use href="#corrc"/></svg>Obras lineales</li>
            <li><i class="tg">+</i><svg class="heavy"><use href="#asm"/></svg>Ensamblajes</li>
            <li><i></i><svg><use href="#inter"/></svg>Intersecciones</li>
            <li><i class="tg">+</i><svg><use href="#survey"/></svg>Topografía</li>
            <li class="end"><i></i><svg><use href="#minute"/></svg>Grupos de minutas</li>
            <li class="root"><i class="tg">−</i><svg><use href="#short"/></svg>Accesos directos a datos [C:\Civil 3D Projects\190...</li>
            <li class="sub"><i class="tg">+</i><svg><use href="#surf"/><use href="#badge"/></svg>Superficies</li>
            <li class="sub"><i class="tg">+</i><svg class="blue"><use href="#align"/><use href="#badge"/></svg>Alineaciones</li>
            <li class="sub"><i></i><svg class="heavy"><use href="#pipe"/><use href="#badge"/></svg>Redes de tuberías</li>
            <li class="sub"><i></i><svg class="heavy"><use href="#pipe"/><use href="#badge"/></svg>Redes de tuberías en carga</li>
            <li class="sub"><i class="tg">+</i><svg><use href="#corrc"/><use href="#badge"/></svg>Obras lineales</li>
            <li class="sub end"><i></i><svg><use href="#minute"/><use href="#badge"/></svg>Grupos de minutas</li>
          </ul>
          <div class="hscroll"><svg><use href="#chev"/></svg><i></i><svg><use href="#chev"/></svg></div>
        </div>
        <div class="preview"></div>
      </div>
      <div class="sidetabs"><button class="on">Prospector</button><button>Configuración</button><button>Topografía</button><button>Caja de herramientas</button></div>
    </aside>

    <section class="drawing">
      <div class="canvas">
        <p class="viewlabel">[−][Superior][Estructura alámbrica 2D]</p>
        <svg class="pointer0"><use href="#net"/></svg>
        <div class="vpbtns"><svg viewBox="0 0 20 20"><path d="M2 9h16v5H2z"/></svg><svg viewBox="0 0 20 20"><path d="M2 6h12v12H2zM6 6V2h12v12h-4M5 12h6M8 9v6"/></svg><svg viewBox="0 0 20 20"><path d="M2 2h5l3 4 3-4h5l-5 8 5 8h-5l-3-4-3 4H2l5-8z"/></svg></div>
        <div class="cube"><span>N</span><span>O</span><button>SUPERIOR</button><span>E</span><span>S</span></div>
        <button class="scu">SCU <svg><use href="#chev"/></svg></button>
        <div class="navbar"><svg><use href="#wheel"/></svg><i class="caret"></i><hr><svg><use href="#hand"/></svg><svg><use href="#zoomx"/></svg><i class="caret"></i><svg><use href="#orbit"/></svg><i class="caret"></i><hr><svg><use href="#film"/></svg></div>
        <svg class="ucs" viewBox="0 0 94 100"><path d="M11 24v60h57M6 76h10v12H6z" stroke-width="2"/><text x="14" y="20">Y</text><text x="73" y="80">X</text></svg>
        <div class="dock">
          <i class="grip"></i>
          <svg><use href="#s1"/></svg><svg><use href="#s2"/></svg><svg><use href="#s3"/></svg><svg><use href="#s4"/></svg><svg><use href="#s5"/></svg><svg><use href="#globe"/></svg><svg><use href="#globe2"/></svg><svg><use href="#pt1"/></svg><svg><use href="#pt2"/></svg><svg><use href="#pt3"/></svg><svg><use href="#pt3"/></svg><svg><use href="#s6"/></svg><svg><use href="#s7"/></svg><hr>
          <svg><use href="#net"/></svg><hr>
          <svg><use href="#s8"/></svg><svg><use href="#s9"/></svg><svg><use href="#s10"/></svg><hr>
          <svg><use href="#r1"/></svg><svg><use href="#r2"/></svg><svg><use href="#r3"/></svg><svg><use href="#r4"/></svg><svg><use href="#r5"/></svg><svg><use href="#r6"/></svg><svg><use href="#r7"/></svg>
          <i class="grip"></i>
          <svg><use href="#net"/></svg><svg><use href="#s5"/></svg><svg><use href="#net"/></svg>
        </div>

        <form class="dialog">
          <div class="dtitle"><svg class="dlogo"><use href="#logo"/></svg><span>Crear superficie a partir de datos SIG - Opciones de objeto</span><button type="button" aria-label="Cerrar"><svg><use href="#x"/></svg></button></div>
          <div class="dmain">
            <nav class="steps"><a class="cur" href="#">Opciones de objeto</a><a href="#">Conectar con datos</a><a class="dim" href="#">Esquema y<br>coordenadas</a><a class="dim" href="#">Consulta<br>geoespacial</a><a class="dim" href="#">Asignación de datos</a></nav>
            <div class="fields">
              <div class="field"><label for="f1">Tipo de objeto de Civil 3D:</label><div class="line"><span class="sel grey"><select id="f1"><option>Superficie</option></select><svg class="ch"><use href="#chev"/></svg></span></div></div>
              <div class="field tight"><label for="f2">Nombre:</label><div class="line"><input id="f2" type="text" value="Superficie_&lt;[Siguiente contador(CP)]&gt;"><button type="button" aria-label="Plantilla de nombre"><svg><use href="#pick"/></svg></button></div></div>
              <div class="field tight"><label for="f3">Descripción:</label><div class="line"><input id="f3" type="text"></div></div>
              <div class="field"><label for="f4">Estilo:</label><div class="line"><span class="sel hl"><svg class="lead"><use href="#house"/></svg><select id="f4"><option>CN de Fondo en 2D (Rango 1.00m. - 5.00m )</option></select><svg class="ch"><use href="#chev"/></svg></span><span class="split"><button type="button" aria-label="Editar estilo"><svg><use href="#edit"/></svg></button><button type="button" aria-label="Más"><i class="caret"></i></button></span><button type="button" aria-label="Ver estilo"><svg><use href="#look"/></svg></button></div></div>
              <div class="field"><label for="f5">Capa:</label><div class="line"><input id="f5" class="ro" type="text" value=" C-SUPE" readonly><button type="button" aria-label="Capa"><svg><use href="#layc"/></svg></button></div></div>
              <div class="field"><label for="f6">Material de renderización:</label><div class="line"><span class="sel ic"><svg class="lead"><use href="#ball"/></svg><select id="f6"><option>ByBlock</option></select><svg class="ch"><use href="#chev"/></svg></span><button type="button" aria-label="Material"><svg><use href="#mat"/></svg></button></div></div>
            </div>
          </div>
          <div class="dfoot"><button type="button" disabled>&lt; Atrás</button><button type="button">Siguiente &gt;</button><button type="button" class="wide" disabled>Finalizar</button><button type="button">Cancelar</button><button type="button" class="apart">Ayuda</button></div>
          <svg class="resize" viewBox="0 0 14 14"><path d="M13 1L1 13M13 5l-8 8M13 9l-4 4"/></svg>
        </form>

        <svg class="ring" viewBox="0 0 90 90"><circle cx="45" cy="45" r="41" stroke="#8b84c6" stroke-width="4"/><path d="M45 46v27l6-5 5 11 5-2-5-11 8-1z" fill="#fff" stroke="#333" stroke-width="2"/></svg>
        <svg class="mouse" viewBox="0 0 76 94"><path d="M38 3C60 3 72 22 72 34v24c0 14-14 32-34 32S4 72 4 58V34C4 22 16 3 38 3z" fill="#eef0ee"/><path d="M4 48c20-5 48-5 68 0M38 3v8M38 40v5"/><rect x="30" y="11" width="16" height="29" rx="8"/></svg>
      </div>

      <div class="cmd">
        <div class="cmdgrip"><i></i><svg class="w"><use href="#x"/></svg><svg><use href="#wrench"/></svg></div>
        <div class="cmdmain"><p>Comando:</p><label class="prompt"><span class="pic">&gt;_</span><i class="caret"></i><input type="text" aria-label="Línea de comando" value="_AeccCreateSurfaceFromGISData"></label></div>
      </div>
    </section>
  </main>

  <footer class="status">
    <nav class="layouts"><a class="on" href="#">Modelo</a><a href="#">Presentación1</a><a href="#">Presentación2</a><button aria-label="Nueva presentación">+</button></nav>
    <div class="stat">
      <span class="coord">-3712.9841, 24526.2175, 0.0000</span><span class="model">MODELO</span>
      <div class="modes"><svg><use href="#grid"/></svg><svg><use href="#snap"/></svg><i class="caret"></i><svg><use href="#ortho"/></svg><svg><use href="#polar"/></svg><i class="caret"></i><svg><use href="#iso"/></svg><i class="caret"></i><span class="pair"><svg class="act"><use href="#track"/></svg><svg class="act"><use href="#osnap"/></svg></span><i class="caret"></i><svg><use href="#lwt"/></svg><svg class="act"><use href="#transp"/></svg><svg class="act"><use href="#anno"/><use href="#star"/></svg><svg><use href="#anno"/><use href="#star"/></svg><svg><use href="#anno"/></svg></div>
      <div class="view"><span>1:500 / 200%</span><i class="caret"></i><svg><use href="#cog"/></svg><i class="caret"></i><svg><use href="#plus"/></svg><svg><use href="#iso2"/></svg><svg><use href="#perf"/></svg><span>1.4</span><svg><use href="#clean"/></svg><svg><use href="#menu"/></svg></div>
    </div>
  </footer>
</div>
</body>
</html>
```
FILE: styles.css
```css
* { box-sizing: border-box; }
body { margin: 0; padding: 69px 5%; background: #000; color: #333; font: 13px/16px Roboto, "Liberation Sans", sans-serif; }
svg { width: 20px; height: 20px; flex: none; fill: none; stroke: currentColor; stroke-width: 1; }
.defs { position: absolute; width: 0; height: 0; }
.heavy { stroke-width: 2; }
button, select, input { font: inherit; color: inherit; margin: 0; padding: 0; border: 0; background: none; border-radius: 0; }
select { appearance: none; }
a { color: inherit; text-decoration: none; }
p, h2, ul { margin: 0; padding: 0; list-style: none; }
.caret { flex: none; width: 0; height: 0; border: 4px solid transparent; border-top: 5px solid #333; border-bottom: 0; }
.app { display: flex; flex-direction: column; min-height: calc(100vh - 138px); background: #aeb0ae; }

/* Title bar and ribbon tabs */
.top { display: flex; height: 47px; background: #9a9c9a; }
.appbtn { position: relative; width: 45px; height: 43px; background: linear-gradient(#d8d8d8, #8a8c8a); border: 1px solid #666; }
.appbtn .logo { position: absolute; left: 2px; top: 0; width: 33px; height: 31px; }
.appbtn .caret { position: absolute; right: 3px; top: 17px; }
.appbtn b { position: absolute; left: 10px; bottom: 0; font-size: 10px; line-height: 12px; }
.topmain { flex: 1; min-width: 0; display: flex; flex-direction: column; }
.titlebar { display: flex; height: 25px; background: #fdfefd; }
.titlebar svg { width: 19px; height: 19px; }
.quick { display: flex; align-items: center; gap: 8px; padding: 0 5px 2px 9px; background: linear-gradient(#dadbda, #bcbebc); }
.quick .caret, .info .caret { border-width: 4px 3px 0; }
.quick .off { opacity: .35; }
.workspace { display: flex; align-items: center; gap: 4px; width: 202px; padding: 0 5px 2px 2px; border: 1px solid #777; background: linear-gradient(#dadbda, #c4c6c4); }
.workspace select { flex: 1; }
.quickmore { width: 19px; display: grid; place-items: center; background: #c8cac8; }
.title { flex: 1; display: flex; justify-content: center; align-items: center; gap: 14px; padding: 0 4px 2px 0; }
.info { display: flex; align-items: center; width: 503px; gap: 7px; padding-bottom: 1px; background: linear-gradient(#dcdddc, #c2c4c2); }
.info .side { margin: 0 -1px 0 4px; border: 4px solid transparent; border-width: 4px 0 4px 5px; border-left-color: #333; }
.info input { width: 202px; height: 24px; padding: 0 3px; border: 1px solid #555; background: #fff; font-size: 12px; font-style: italic; }
.info input::placeholder { color: #777; opacity: 1; }
.uname { margin-left: -4px; white-space: nowrap; }
.cart { margin-left: 4px; }
.help { width: 19px; height: 19px; margin-left: 16px; border: 1px solid #456; border-radius: 10px; background: #f4f8ff; color: #1d57b0; font-weight: bold; line-height: 17px; }
.winbtns { display: flex; justify-content: space-around; width: 183px; padding: 0 0 2px 26px; }
.winbtns svg { width: 15px; height: 15px; display: block; }
.tabs { display: flex; align-items: stretch; flex: 1; color: #333; }
.tablist { flex: 1; display: flex; justify-content: space-between; margin: 0 24px 0 4px; }
.tabs a { padding: 4px 10px 0; white-space: nowrap; }
.tabs .on { background: #eceeec; }
.pill { align-self: center; width: 18px; height: 11px; border: 1px solid #777; border-radius: 6px; background: #ddd; display: grid; place-items: center; }
.pill i { width: 4px; height: 4px; background: #555; }
.tabs > .caret { align-self: center; margin: 0 75px 0 8px; border-width: 4px 3px 0; }

/* Ribbon */
.ribbon { display: grid; grid-template-columns: 212fr 160fr 415fr 270fr 134fr 334fr 366fr 92fr 178fr; height: 112px; color: #b3b5b3; background: #fcfdfc; }
.panel { display: flex; flex-direction: column; min-width: 0; border-right: 1px solid #cfd1cf; }
.pbody { height: 90px; padding-top: 7px; }
.plabel { flex: 1; display: flex; align-items: center; justify-content: center; gap: 8px; background: #eff1ef; color: #3a3a3a; white-space: nowrap; }
.rest { background: linear-gradient(#e4e6e4, #a4a6a4); }
.pbody button { display: flex; align-items: center; gap: 5px; white-space: nowrap; }
.pbody button .caret { margin-left: 3px; border-width: 4px 3px 0; border-top-color: #777; }
.rows { display: grid; grid-auto-rows: 27px; align-items: center; }
.terr { padding-left: 28px; }
.dis { grid-template-columns: 160px 111px auto; padding-left: 7px; }
.vis { padding-left: 48px; }
.dib { grid-template-columns: 42px 45px auto; padding-left: 7px; }
.dib button .caret { margin-left: 0; }
.mod { grid-template-columns: 96px 92px 1fr 28px; padding-left: 6px; }
.pal { display: flex; gap: 1px; padding: 6px 3px 0 2px; }
.pal .big { flex: 1; height: 82px; flex-direction: column; justify-content: flex-start; gap: 4px; padding-top: 6px; border: 1px solid #5f9fd8; background: #c3dcf4; color: #9fb2c4; }
.big svg { width: 38px; height: 34px; }
.palgrid { display: grid; grid-template-columns: 28px 28px; grid-auto-rows: 26px; row-gap: 2px; }
.palgrid span { display: grid; place-items: center; }
.palgrid .lit { border: 1px solid #5f9fd8; background: #cce2f6; color: #98a8b6; }
.capas, .port { display: flex; }
.pbody .tall { flex-direction: column; gap: 3px; line-height: 18px; }
.capas .tall { width: 82px; }
.tall svg { width: 40px; height: 38px; }
.port .tall { width: 65px; padding-top: 1px; }
.pbody.port .tall .caret { margin: 0; }
.laygrid { display: grid; grid-auto-rows: 27px; }
.layersel { display: flex; align-items: center; gap: 5px; width: 235px; height: 25px; padding: 0 4px 0 7px; border: 1px solid #d4d6d4; background: #f4f6f4; }
.layersel svg { width: 17px; height: 17px; }
.swatch { width: 16px; height: 16px; background: #777; }
.layersel select { flex: 1; }
.lrow { display: flex; align-items: center; gap: 7px; padding-left: 6px; }

/* Drawing tabs */
.docs { display: flex; align-items: flex-end; height: 29px; padding-left: 15px; gap: 2px; background: #aeb0ae; }
.doc { display: flex; align-items: center; justify-content: space-between; width: 148px; height: 25px; padding: 0 19px; border-radius: 8px 10px 0 0; background: #d4d6d4; color: #666; }
.doc.on { padding: 0 28px 0 8px; background: #f2f4f2; color: #222; }
.doc svg { width: 10px; height: 10px; color: #666; }
.add { width: 24px; height: 21px; margin-bottom: 3px; border-radius: 6px; background: #dcdedc; font-weight: bold; }
.docs .add { margin: 0 0 2px -6px; }

/* Toolspace */
.work { flex: 1; display: flex; background: #f0f2f0; }
.toolspace { display: flex; width: 389px; padding-top: 6px; }
.tsmain { width: 363px; display: flex; flex-direction: column; padding-bottom: 6px; }
.tsmain h2 { height: 23px; padding: 3px 15px; background: #e6e8e6; font-size: 13px; line-height: 16px; font-weight: normal; }
.tsbar { display: flex; align-items: center; gap: 11px; height: 34px; padding: 0 6px 0 3px; }
.tsbar span { flex: 1; }
.tsbar .off { color: #aaa; }
.tsbar button { width: 19px; height: 19px; border: 2px solid #777; background: #eef; font-weight: bold; line-height: 15px; }
.tsview { position: relative; height: 25px; border: 1px solid #b4b6b4; background: #dfe1df; }
.tsview select { width: 100%; height: 23px; padding-left: 1px; font-size: 12px; }
.tsview svg { position: absolute; right: 4px; top: 6px; width: 11px; height: 11px; }
.tree { display: flex; flex-direction: column; justify-content: space-between; height: 621px; padding-top: 2px; margin-bottom: 7px; border: 2px solid #c0c2c0; border-left: 0; background: #fdfffd; }
.tree ul { display: grid; grid-auto-rows: 1fr; height: 495px; }
.tree li { display: flex; align-items: center; padding-left: 26px; white-space: nowrap; background: repeating-linear-gradient(#888 0 2px, transparent 2px 4px) 14px 0 / 1px 100% no-repeat; }
.tree li > i { flex: none; align-self: stretch; width: 22px; background: repeating-linear-gradient(#999 0 2px, transparent 2px 4px) 8px 0 / 1px 100% no-repeat, repeating-linear-gradient(90deg, #999 0 2px, transparent 2px 4px) 8px 50% / 12px 1px no-repeat; }
.tree li.end > i { background-size: 1px 50%, 12px 1px; }
.tree li.root { padding-left: 5px; }
.tree li.root, .tree li.sub { background: none; }
.tree li.root > i { background: none; }
.tree li .tg { position: relative; z-index: 0; display: flex; align-items: center; padding-left: 6px; color: #445; font: 10px/8px "Liberation Sans", sans-serif; }
.tree .tg::before { content: ""; position: absolute; z-index: -1; left: 4px; top: 6px; width: 10px; height: 10px; border: 1px solid #999; border-radius: 2px; background: #eef; }
.tree li svg { width: 19px; height: 19px; margin-right: 7px; }
.tree .blue { color: #5b7fa8; }
.hscroll { display: flex; align-items: center; gap: 4px; height: 17px; padding: 0 5px 0 3px; margin-bottom: 2px; background: #eceeec; }
.hscroll svg { width: 11px; height: 11px; transform: rotate(90deg); stroke-width: 2; }
.hscroll svg:last-child { transform: rotate(-90deg); margin-left: auto; }
.hscroll i { width: 291px; height: 16px; background: #c8cac8; }
.preview { flex: 1; border: 2px solid #c4c6c4; border-left: 0; background: #eef0ee; }
.sidetabs { width: 23px; padding-top: 26px; }
.sidetabs button { display: block; width: 23px; height: 136px; padding: 0; writing-mode: vertical-rl; transform: rotate(180deg); border: 1px solid #aaacaa; border-right: 0; border-radius: 3px 0 0 3px; background: #e8eae8; color: #777; text-align: center; line-height: 18px; }
.sidetabs .on { background: #f0f2f0; color: #444; }

/* Drawing area */
.drawing { flex: 1; min-width: 0; display: flex; flex-direction: column; }
.canvas { position: relative; flex: 1; background: #fdfffd; overflow: hidden; }
.viewlabel { padding: 12px 4px; }
.pointer0 { position: absolute; left: 3px; top: 29px; width: 17px; height: 17px; }
.vpbtns { position: absolute; right: 45px; top: 14px; display: flex; gap: 6px; color: #777; }
.vpbtns svg { width: 16px; height: 16px; stroke-width: 2; }
.cube { position: absolute; right: 52px; top: 48px; width: 152px; height: 152px; display: grid; grid-template: 1fr 60px 1fr / 1fr 60px 1fr; align-items: center; justify-items: center; border-radius: 50%; background: radial-gradient(closest-side, transparent 68%, #fafbfa 69% 99%, transparent); font-weight: bold; font-size: 20px; line-height: 24px; color: #fff; -webkit-text-stroke: 1px #b4b4b4; }
.cube span:first-child { grid-column: 1 / 4; align-self: start; }
.cube span:nth-child(2) { justify-self: start; }
.cube span:nth-child(4) { justify-self: end; }
.cube span:last-child { grid-column: 1 / 4; align-self: end; }
.cube button { width: 60px; height: 60px; border: 2px solid #b4b6b4; background: #f2f2f4; color: #888; font-size: 11px; font-weight: bold; -webkit-text-stroke: 0; }
.scu { position: absolute; right: 104px; top: 223px; width: 50px; height: 18px; display: flex; align-items: center; justify-content: center; gap: 5px; background: #eeeef4; color: #999; font-size: 12px; }
.scu svg { width: 9px; height: 9px; }
.navbar { position: absolute; right: 37px; top: 268px; width: 40px; height: 243px; display: flex; flex-direction: column; align-items: center; justify-content: space-between; padding: 22px 4px 18px; border: 2px solid #d4d6d4; border-radius: 6px; background: #f8faf8; color: #dcdedc; }
.navbar svg { width: 26px; height: 26px; }
.navbar .caret { border-width: 4px 3px 0; border-top-color: #ccc; }
.navbar hr { width: 100%; margin: 0; border: 0; border-top: 1px solid #ddd; }
.ucs { position: absolute; left: 107px; bottom: 57px; width: 94px; height: 100px; color: #555; }
.ucs text { font-size: 19px; fill: #555; stroke: none; }
.dock { position: absolute; right: 0; top: 5px; width: 31px; height: 711px; display: flex; flex-direction: column; align-items: center; justify-content: space-between; padding: 0 0 1px; border: 2px solid #b4b6b4; background: #eceeec; color: #555; }
.dock svg { width: 20px; height: 20px; }
.dock .grip { width: 100%; height: 9px; margin-bottom: -2px; border: 1px solid #777; background: #999b99; }
.dock hr { width: 22px; margin: 0; border: 0; border-top: 2px solid #c4c6c4; }

/* Dialog */
.dialog { position: absolute; left: 226px; top: 87px; width: 802px; height: 660px; display: flex; flex-direction: column; border: 2px solid #8e908e; background: #eef0ee; box-shadow: 4px 6px 14px #0004; font: 12px/14px "Liberation Sans", sans-serif; }
.dtitle { display: flex; align-items: center; gap: 7px; height: 34px; padding: 0 9px 2px 10px; background: #fdfefd; font: 13px/16px Roboto, "Liberation Sans", sans-serif; }
.dlogo { width: 15px; height: 15px; }
.dtitle span { flex: 1; }
.dtitle button { display: grid; }
.dtitle button svg { width: 15px; height: 15px; stroke-width: 2; }
.dmain { flex: 1; display: flex; margin: 11px 70px 11px 11px; }
.steps { width: 129px; padding: 2px 0 0 9px; border-right: 1px solid #999; display: flex; flex-direction: column; align-items: flex-start; color: #2a22e0; }
.steps a { position: relative; margin-bottom: 24px; text-decoration: underline; }
.steps .dim { color: #8293a0; }
.steps .dim + .dim { margin-bottom: 23px; }
.steps .cur::before { content: ""; position: absolute; left: -12px; top: -1px; border: 8px solid transparent; border-left: 8px solid #2f8ee6; border-right: 0; }
.fields { flex: 1; max-width: 536px; padding: 6px 0 0 21px; }
.field { display: flex; flex-direction: column; gap: 6px; height: 43px; margin-bottom: 12px; }
.field.tight { margin-bottom: 7px; }
.line { display: flex; gap: 7px; height: 23px; }
.line input, .sel { flex: 1; min-width: 0; border: 1px solid #8c8e8c; background: #fdfffd; }
.line input { padding: 0 3px; }
.line .ro { background: #eef0ee; }
.sel { position: relative; display: flex; align-items: center; }
.sel select { flex: 1; height: 21px; padding: 0 3px; }
.sel.grey { background: #dfe1df; border-color: #bbbdbb; }
.hl select { color: #fff; background: linear-gradient(#1684ee, #1684ee) 0 3px / 244px 15px no-repeat; padding-left: 2px; }
.sel .lead { width: 19px; height: 19px; margin: 0 2px; }
.sel .ch { position: absolute; right: 5px; top: 6px; width: 10px; height: 10px; pointer-events: none; }
.line button { width: 26px; display: grid; place-items: center; border: 1px solid #c0c2c0; background: #e2e4e2; }
.split { display: flex; }
.split button:last-child { width: 17px; }
.dfoot { display: flex; gap: 4px; height: 93px; margin: 0 69px 0 11px; padding-top: 8px; border-top: 2px solid #b0b2b0; justify-content: flex-end; }
.dfoot button { width: 81px; height: 28px; border: 1px solid #b4b6b4; background: #e4e6e4; }
.dfoot button:disabled { background: #cbcdcb; color: #8f918f; }
.dfoot .wide { width: 138px; margin-left: 9px; }
.dfoot .apart { margin-left: 5px; }
.resize { position: absolute; right: 0; bottom: 0; width: 14px; height: 14px; color: #888; }
.ring { position: absolute; left: 469px; top: 371px; width: 90px; height: 90px; }
.mouse { position: absolute; left: 522px; top: 482px; width: 76px; height: 94px; stroke-width: 3; color: #444; filter: drop-shadow(4px 5px 4px #0008); }

/* Command line */
.cmd { display: flex; height: 60px; font: 13px/16px "Liberation Mono", monospace; }
.cmdgrip { width: 27px; display: flex; flex-direction: column; align-items: center; justify-content: space-between; padding: 5px 4px 2px 2px; background: linear-gradient(#888a88, #444644); color: #fff; }
.cmdgrip i { width: 20px; height: 5px; border: 1px solid #bbb; border-width: 1px 0; }
.cmdgrip svg { width: 17px; height: 17px; }
.cmdgrip .w { width: 12px; height: 12px; stroke-width: 3; }
.cmdmain { flex: 1; display: flex; flex-direction: column; border-top: 2px solid #aaacaa; background: #c6c8c6; }
.cmdmain p { flex: 1; padding: 14px 2px 0; }
.prompt { display: flex; align-items: center; gap: 3px; height: 25px; padding-left: 4px; border-top: 1px solid #999; background: #fdfffd; }
.prompt input { flex: 1; }
.prompt .caret { border-width: 4px 3px 0; border-top-color: #888; }
.pic { width: 17px; height: 16px; border: 1px solid #bbb; border-radius: 2px; background: #e8eaf0; font-size: 10px; line-height: 13px; text-align: center; }

/* Status bar */
.status { display: flex; justify-content: space-between; height: 31px; }
.layouts { display: flex; gap: 3px; padding-left: 15px; }
.layouts a { height: 21px; padding: 3px 10px 0; border-radius: 0 0 9px 9px; background: #d0d2d0; color: #777; }
.layouts a + a { width: 106px; padding: 3px 11px 0; }
.layouts .on { width: 68px; background: #f2f4f2; color: #222; font-weight: bold; }
.layouts button { width: 26px; height: 20px; border-radius: 0 0 7px 7px; background: #dcdedc; font-weight: bold; }
.stat { display: flex; align-items: center; width: 1041px; padding: 0 4px 0 41px; border-top: 1px solid #888; background: #e2e4e2; color: #444; white-space: nowrap; }
.coord { width: 207px; }
.model { width: 64px; }
.modes { display: flex; align-items: center; justify-content: space-between; width: 396px; }
.view { flex: 1; display: flex; align-items: center; justify-content: space-between; margin-left: 10px; }
.stat .act { width: 26px; height: 26px; padding: 2px; border: 1px solid #5f9fd0; background: #c0e0f6; }
.pair { display: flex; gap: 1px; }
```
